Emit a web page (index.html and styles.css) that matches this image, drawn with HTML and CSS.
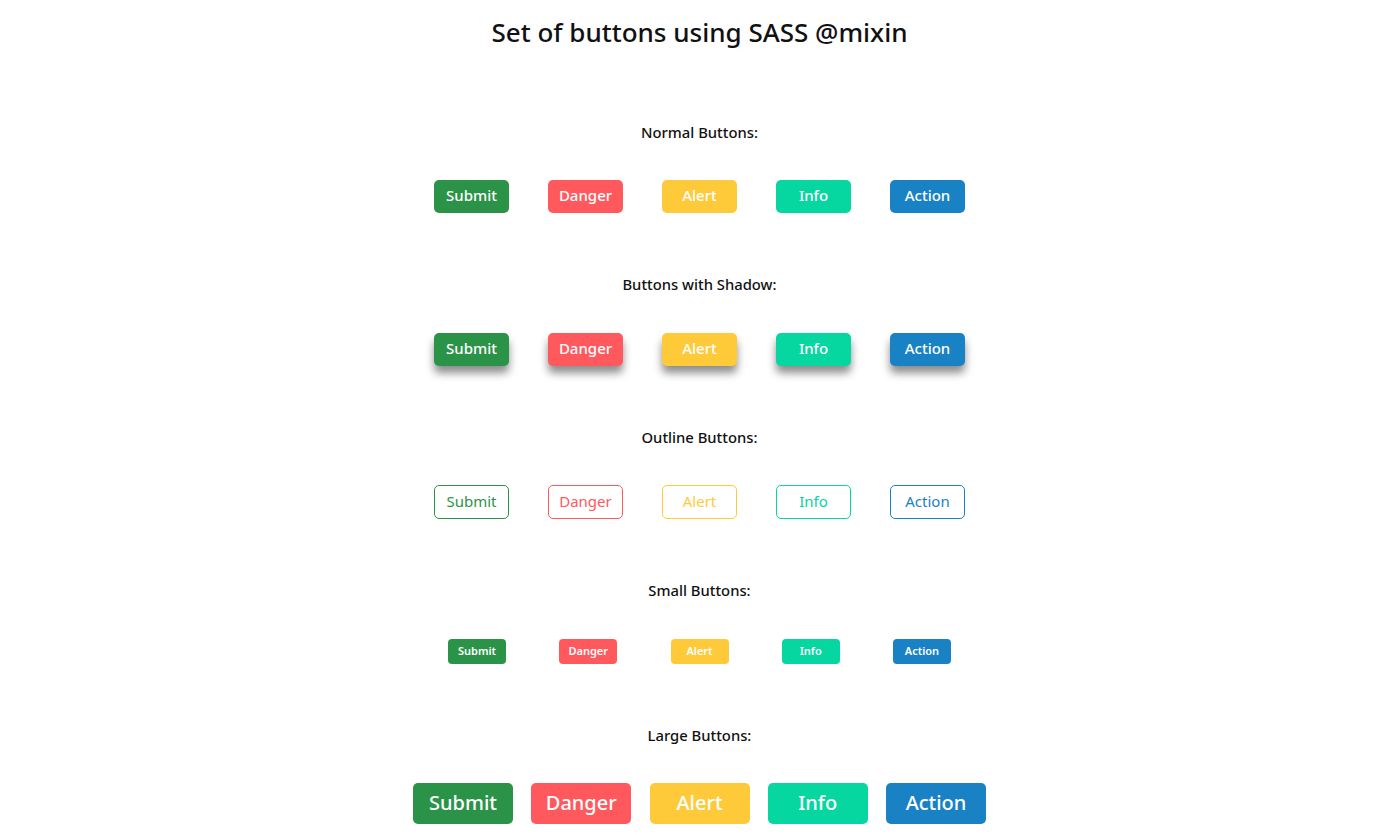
FILE: index.html
```html
<!DOCTYPE html>
<html lang="en">
<head>
<meta charset="utf-8">
<title>Set of buttons using SASS @mixin</title>
<link rel="stylesheet" href="styles.css">
</head>
<body>
<main class="page">
  <h1 class="title">Set of buttons using SASS @mixin</h1>

  <section class="group">
    <h2 class="label">Normal Buttons:</h2>
    <div class="row row-normal">
      <button class="btn submit">Submit</button>
      <button class="btn danger">Danger</button>
      <button class="btn alert">Alert</button>
      <button class="btn info">Info</button>
      <button class="btn action">Action</button>
    </div>
  </section>

  <section class="group">
    <h2 class="label">Buttons with Shadow:</h2>
    <div class="row row-normal">
      <button class="btn shadow submit">Submit</button>
      <button class="btn shadow danger">Danger</button>
      <button class="btn shadow alert">Alert</button>
      <button class="btn shadow info">Info</button>
      <button class="btn shadow action">Action</button>
    </div>
  </section>

  <section class="group">
    <h2 class="label">Outline Buttons:</h2>
    <div class="row row-normal">
      <button class="btn outline o-submit">Submit</button>
      <button class="btn outline o-danger">Danger</button>
      <button class="btn outline o-alert">Alert</button>
      <button class="btn outline o-info">Info</button>
      <button class="btn outline o-action">Action</button>
    </div>
  </section>

  <section class="group">
    <h2 class="label">Small Buttons:</h2>
    <div class="row row-small">
      <button class="btn small submit">Submit</button>
      <button class="btn small danger">Danger</button>
      <button class="btn small alert">Alert</button>
      <button class="btn small info">Info</button>
      <button class="btn small action">Action</button>
    </div>
  </section>

  <section class="group">
    <h2 class="label">Large Buttons:</h2>
    <div class="row row-large">
      <button class="btn large submit">Submit</button>
      <button class="btn large danger">Danger</button>
      <button class="btn large alert">Alert</button>
      <button class="btn large info">Info</button>
      <button class="btn large action">Action</button>
    </div>
  </section>
</main>
</body>
</html>
```

FILE: styles.css
```css
* { box-sizing: border-box; }

html, body {
  margin: 0;
  padding: 0;
  background: #ffffff;
}

body {
  font-family: "Noto Sans", "Open Sans", sans-serif;
  color: #111111;
}

.page {
  padding-left: 18px;
  text-align: center;
}

.title {
  margin: 16px 0 0;
  font-size: 26px;
  line-height: 32px;
  font-weight: 500;
}

.group {
  display: flex;
  flex-direction: column;
  align-items: center;
}

.group:first-of-type {
  margin-top: 74.5px;
}

.label {
  margin: 0 0 39.5px;
  font-size: 14.8px;
  line-height: 18px;
  font-weight: 500;
}

.row {
  display: flex;
  justify-content: center;
  margin-bottom: 62px;
}

.row-normal { gap: 39px; }
.row-small { gap: 53.25px; }
.row-large { gap: 18.25px; }

.btn {
  font-family: inherit;
  border: none;
  color: #ffffff;
  width: 75px;
  height: 33px;
  border-radius: 5px;
  font-size: 15px;
  font-weight: 500;
  padding: 0 0 2px;
  line-height: 1;
}

.submit { background: #2b9348; }
.danger { background: #ff595e; }
.alert  { background: #ffca3a; }
.info   { background: #06d6a0; }
.action { background: #1982c4; }

.shadow {
  box-shadow: 0 7px 9px rgba(0, 0, 0, 0.45);
}

.outline {
  height: 34px;
  background: #ffffff;
  border: 1px solid currentColor;
  font-weight: 400;
}

.o-submit { color: #2b9348; }
.o-danger { color: #ff595e; }
.o-alert  { color: #ffca3a; }
.o-info   { color: #06d6a0; }
.o-action { color: #1982c4; }

.small {
  width: 58px;
  height: 25px;
  font-size: 11px;
  font-weight: 600;
  border-radius: 4px;
}

.large {
  width: 100px;
  height: 41px;
  font-size: 20px;
  border-radius: 5px;
}
```
